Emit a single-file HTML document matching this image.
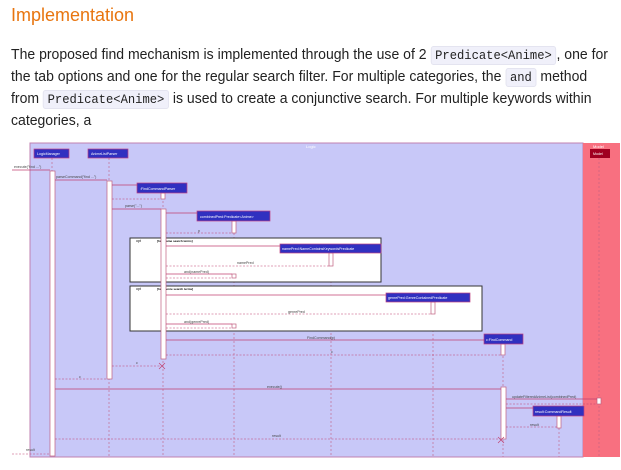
<!DOCTYPE html>
<html><head><meta charset="utf-8"><style>
body{margin:0;width:621px;height:470px;background:#fff;overflow:hidden;font-family:"Liberation Sans",sans-serif;}
h2{position:absolute;left:11px;top:5px;margin:0;font-weight:normal;font-size:18px;color:#e8750f;}
p{position:absolute;left:11px;top:44px;width:800px;margin:0;font-size:15px;line-height:21px;color:#222;transform:scaleX(0.935);transform-origin:0 0;white-space:nowrap;}
code{font-family:"Liberation Mono",monospace;font-size:13px;background:#f0f0fa;border:1px solid #e4e4f0;border-radius:3px;padding:1px 4px;}
svg{position:absolute;left:0;top:0}
</style></head><body>
<h2>Implementation</h2>
<p>The proposed find mechanism is implemented through the use of 2 <code>Predicate&lt;Anime&gt;</code>, one for<br>the tab options and one for the regular search filter. For multiple categories, the <code>and</code> method<br>from <code>Predicate&lt;Anime&gt;</code> is used to create a conjunctive search. For multiple keywords within<br>categories, a</p>
<svg width="621" height="470" font-family="Liberation Sans" font-size="4">
<rect x="30" y="143" width="553" height="314" fill="#c8c8f8" stroke="#c080b0"/>
<rect x="583" y="143" width="37" height="314" fill="#f87080"/>
<text x="306" y="148" fill="#fff" font-size="4">Logic</text>
<text x="593" y="148" fill="#fff" font-size="4">Model</text>
<g stroke="#c06080" stroke-dasharray="2,2" stroke-width="0.6">
<line x1="52" y1="158" x2="52" y2="457"/><line x1="109" y1="158" x2="109" y2="457"/>
<line x1="163" y1="193" x2="163" y2="457"/><line x1="234" y1="221" x2="234" y2="457"/>
<line x1="331" y1="253" x2="331" y2="457"/><line x1="433" y1="302" x2="433" y2="457"/>
<line x1="503" y1="344" x2="503" y2="457"/><line x1="559" y1="416" x2="559" y2="457"/>
<line x1="599" y1="158" x2="599" y2="457"/>
</g>
<rect x="130" y="238" width="251" height="44" fill="#fff" stroke="#333"/>
<rect x="130" y="286" width="352" height="45" fill="#fff" stroke="#333"/>
<text x="136" y="242" font-size="3.5">opt</text><text x="157" y="242" font-size="3" font-weight="bold">[has Name search terms]</text>
<text x="136" y="290" font-size="3.5">opt</text><text x="157" y="290" font-size="3" font-weight="bold">[has Genre search terms]</text>
<g fill="#fff" stroke="#c06080" stroke-width="0.7">
<rect x="50" y="171" width="5" height="285"/><rect x="107" y="181" width="5" height="198"/>
<rect x="161" y="209" width="5" height="150"/><rect x="161" y="193" width="4" height="6"/>
<rect x="232" y="221" width="4" height="12"/><rect x="329" y="253" width="4" height="13"/>
<rect x="232" y="274" width="4" height="4"/><rect x="431" y="302" width="4" height="12"/>
<rect x="232" y="324" width="4" height="4"/><rect x="501" y="344" width="4" height="11"/>
<rect x="501" y="387" width="5" height="52"/><rect x="557" y="416" width="4" height="12"/>
<rect x="597" y="398" width="4" height="6"/>
</g>
<g fill="#3030c0" stroke="#c04080" stroke-width="0.7">
<rect x="34" y="149" width="35" height="9"/><rect x="88" y="149" width="40" height="9"/>
<rect x="137" y="183" width="50" height="10"/><rect x="197" y="211" width="73" height="10"/>
<rect x="280" y="244" width="101" height="9"/><rect x="386" y="293" width="84" height="9"/>
<rect x="484" y="334" width="39" height="10"/><rect x="533" y="406" width="51" height="10"/>
</g>
<rect x="590" y="149" width="20" height="9" fill="#a00020"/>
<g fill="#fff" font-size="3.6">
<text x="37" y="155">LogicManager</text><text x="91" y="155">AnimeListParser</text>
<text x="140" y="190">:FindCommandParser</text><text x="200" y="218">combinedPred:Predicate&lt;Anime&gt;</text>
<text x="282" y="250">namePred:NameContainsKeywordsPredicate</text><text x="388" y="299">genrePred:GenreContainedPredicate</text>
<text x="486" y="341">c:FindCommand</text><text x="535" y="413">result:CommandResult</text><text x="593" y="155">Model</text>
</g>
<g stroke="#c04070" stroke-width="0.7" fill="none">
<line x1="12" y1="170" x2="50" y2="170"/><line x1="55" y1="180" x2="107" y2="180"/>
<line x1="112" y1="185" x2="137" y2="185"/><line x1="112" y1="209" x2="161" y2="209"/>
<line x1="166" y1="213" x2="197" y2="213"/><line x1="166" y1="246" x2="280" y2="246"/>
<line x1="166" y1="295" x2="386" y2="295"/><line x1="166" y1="274" x2="232" y2="274"/>
<line x1="166" y1="324" x2="232" y2="324"/><line x1="166" y1="340" x2="484" y2="340"/>
<line x1="55" y1="389" x2="501" y2="389"/><line x1="506" y1="399" x2="597" y2="399"/>
<line x1="506" y1="408" x2="533" y2="408"/>
<path d="M159 363l6 6M165 363l-6 6M498 437l6 6M504 437l-6 6"/>
</g>
<g stroke="#c04070" stroke-width="0.6" stroke-dasharray="2,1.5" fill="none">
<line x1="112" y1="199" x2="161" y2="199"/><line x1="166" y1="233" x2="232" y2="233"/>
<line x1="166" y1="266" x2="329" y2="266"/><line x1="166" y1="278" x2="232" y2="278"/>
<line x1="166" y1="314" x2="431" y2="314"/><line x1="166" y1="328" x2="232" y2="328"/>
<line x1="166" y1="355" x2="501" y2="355"/><line x1="112" y1="366" x2="161" y2="366"/>
<line x1="55" y1="379" x2="107" y2="379"/><line x1="506" y1="404" x2="597" y2="404"/>
<line x1="506" y1="427" x2="557" y2="427"/><line x1="55" y1="439" x2="501" y2="439"/>
<line x1="12" y1="454" x2="50" y2="454"/>
</g>
<g fill="#444" font-size="3.6">
<text x="14" y="168">execute("find ...")</text><text x="56" y="178">parseCommand("find ...")</text>
<text x="125" y="207">parse("...")</text><text x="198" y="232">p</text>
<text x="237" y="264">namePred</text><text x="184" y="273">and(namePred)</text>
<text x="288" y="313">genrePred</text><text x="184" y="323">and(genrePred)</text>
<text x="307" y="339">FindCommand(p)</text><text x="331" y="353">c</text>
<text x="136" y="364">c</text><text x="79" y="378">c</text>
<text x="267" y="388">execute()</text><text x="512" y="398">updateFilteredAnimeList(combinedPred)</text>
<text x="530" y="426">result</text><text x="272" y="437">result</text><text x="26" y="451">result</text>
</g>
</svg>
</body></html>
